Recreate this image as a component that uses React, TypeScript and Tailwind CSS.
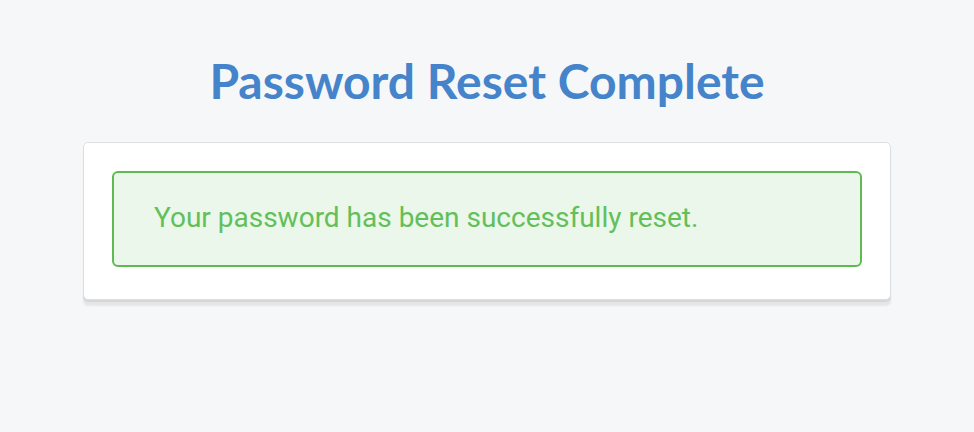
import React from "react";

export default function App() {
  return (
    <div className="min-h-[432px] w-full bg-[#f6f7f9] pt-[51px]" style={{ fontFamily: "Roboto, sans-serif" }}>
      <h1
        className="text-center text-[48px] leading-[60px] font-bold text-[#4584ca]"
        style={{ fontFamily: "Lato, sans-serif" }}
      >
        Password Reset Complete
      </h1>
      <div className="mx-auto mt-[31px] w-[808px] rounded-[5px] border border-[#dedfe1] bg-white px-[28px] pt-[28px] pb-[32px] shadow-[0_2px_0_#d6d7d9,0_6px_2px_rgba(0,0,0,0.07)]">
        <div className="flex h-[96px] items-center rounded-[6px] border-2 border-[#5dbb52] bg-[#eaf7ea] px-[40px] pb-[3px]">
          <p className="text-[28px] leading-[42px] text-[#63bf5a]">Your password has been successfully reset.</p>
        </div>
      </div>
    </div>
  );
}
